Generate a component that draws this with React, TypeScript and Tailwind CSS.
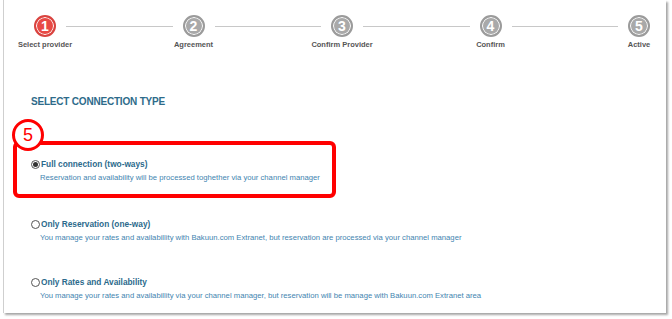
const steps = [
  { n: 1, label: "Select provider", active: true },
  { n: 2, label: "Agreement" },
  { n: 3, label: "Confirm Provider" },
  { n: 4, label: "Confirm" },
  { n: 5, label: "Active" },
];

const options = [
  {
    title: "Full connection (two-ways)",
    text: "Reservation and availability will be processed toghether via your channel manager",
    checked: true,
  },
  {
    title: "Only Reservation (one-way)",
    text: "You manage your rates and availabillity with Bakuun.com Extranet, but reservation are processed via your channel manager",
  },
  {
    title: "Only Rates and Availability",
    text: "You manage your rates and availabillity via your channel manager, but reservation will be manage with Bakuun.com Extranet area",
  },
];

function StepCircle({ n, active }: { n: number; active?: boolean }) {
  return (
    <div
      className={
        "flex h-[22px] w-[22px] shrink-0 items-center justify-center rounded-full border-2 text-[14px] font-bold leading-none text-white shadow-[inset_0_0_0_1px_#fff] " +
        (active ? "border-[#d9433f] bg-[#e84a45]" : "border-[#9b9b9b] bg-[#a9a9a9]")
      }
    >
      {n}
    </div>
  );
}

function Radio({ checked }: { checked?: boolean }) {
  return (
    <span className="flex h-[9px] w-[9px] shrink-0 items-center justify-center rounded-full border border-[#555] bg-white">
      {checked && <span className="h-[5px] w-[5px] rounded-full bg-[#333]" />}
    </span>
  );
}

function Option({ title, text, checked }: { title: string; text: string; checked?: boolean }) {
  return (
    <div className="flex flex-col">
      <div className="flex items-center gap-[1px]">
        <Radio checked={checked} />
        <span className="text-[8.3px] font-bold leading-[12px] text-[#2b6a8c]">{title}</span>
      </div>
      <div className="mt-[3px] pl-[9px] text-[7.7px] leading-[10px] text-[#3f85b0]">{text}</div>
    </div>
  );
}

export default function App() {
  return (
    <div className="h-[319px] w-[672px] bg-white font-['Liberation_Sans',Arial,sans-serif]">
      <div className="ml-[3px] h-[313px] w-[663px] border-l border-[#cfcfcf] bg-white shadow-[2px_2px_2px_rgba(0,0,0,0.35)]">
        {/* stepper */}
        <div className="flex items-start pl-[30px] pr-[16px] pt-[15px]">
          {steps.map((s, i) => (
            <div key={s.n} className="contents">
              {i > 0 && <div className="mx-[10px] mt-[11px] h-px flex-1 bg-[#c8c8c8]" />}
              <div className="flex w-[22px] flex-col items-center">
                <StepCircle n={s.n} active={s.active} />
                <span className="mt-[3px] whitespace-nowrap text-[7.5px] font-bold leading-[10px] text-[#555]">
                  {s.label}
                </span>
              </div>
            </div>
          ))}
        </div>

        <div className="mt-[46px] pl-[27px] text-[10px] font-bold leading-[12px] tracking-[-0.2px] text-[#2e6b8a]">
          SELECT CONNECTION TYPE
        </div>

        <div className="relative ml-[9px] mt-[33px] w-[323px] rounded-[6px] border-4 border-[#ff0000] pb-[11px] pl-[14px] pt-[13px]">
          <div className="absolute left-[-5px] top-[-26px] flex h-[32px] w-[32px] items-center justify-center rounded-full border-[3px] border-[#ff0000] bg-white text-[18px] leading-none text-[#ff0000]">
            5
          </div>
          <Option {...options[0]} />
        </div>

        <div className="ml-[27px] mt-[20px]">
          <Option {...options[1]} />
        </div>
        <div className="ml-[27px] mt-[33px]">
          <Option {...options[2]} />
        </div>
      </div>
    </div>
  );
}
